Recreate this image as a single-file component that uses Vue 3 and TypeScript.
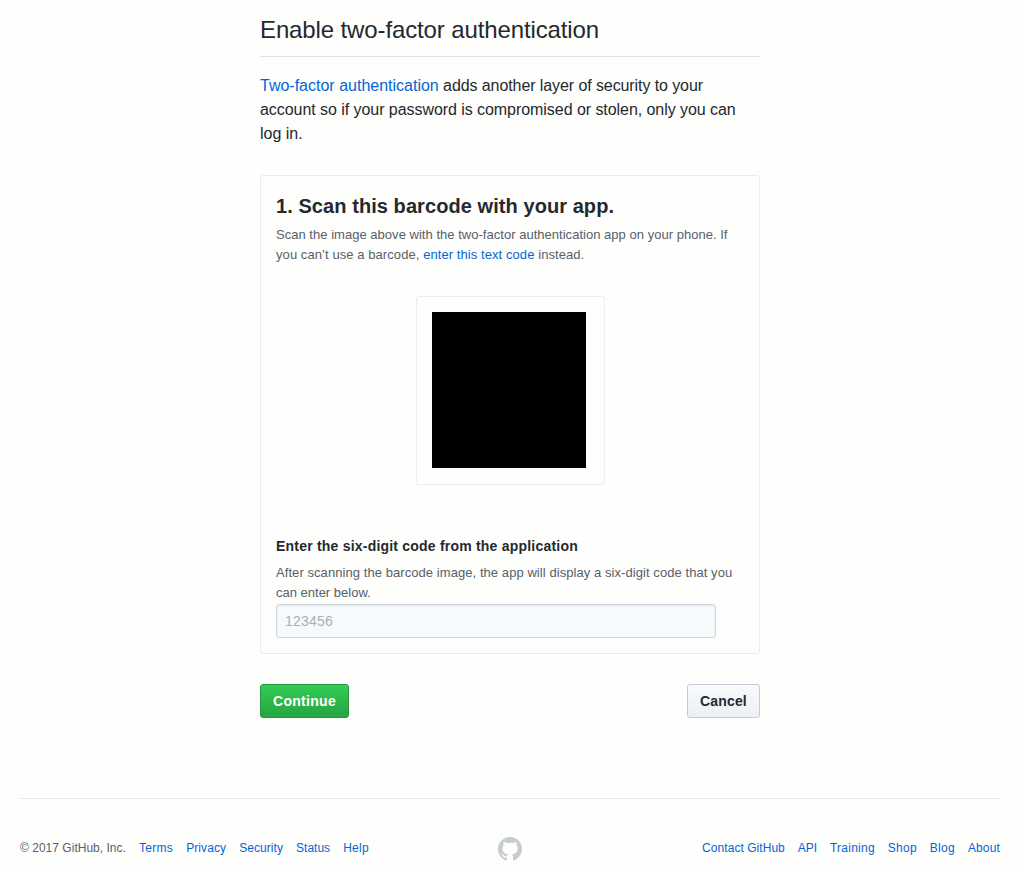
<script setup lang="ts">
import { ref } from 'vue'

interface FooterLink {
  label: string
  tracking: number
}

const code = ref('')
const leftLinks: FooterLink[] = [
  { label: 'Terms', tracking: 0.3 },
  { label: 'Privacy', tracking: 0.1 },
  { label: 'Security', tracking: 0.07 },
  { label: 'Status', tracking: 0 },
  { label: 'Help', tracking: 0.3 },
]
const rightLinks: FooterLink[] = [
  { label: 'Contact GitHub', tracking: 0.05 },
  { label: 'API', tracking: -0.1 },
  { label: 'Training', tracking: 0.25 },
  { label: 'Shop', tracking: 0.25 },
  { label: 'Blog', tracking: 0.25 },
  { label: 'About', tracking: 0.15 },
]
</script>

<template>
  <div class="page">
    <main class="content">
      <h1 class="title">Enable two-factor authentication</h1>
      <p class="lead">
        <a class="link">Two-factor authentication</a><span class="lead-a"> adds another layer of security to your</span><br />
        <span class="lead-b">account so if your password is compromised or stolen, only you can</span><br />
        log in.
      </p>

      <section class="box">
        <h2 class="step">1. Scan this barcode with your app.</h2>
        <p class="note">
          <span class="scan-a">Scan the image above with the two-factor authentication app on your phone. If</span><br />
          <span class="scan-b">you can’t use a barcode, <a class="link">enter this text code</a> instead.</span>
        </p>
        <div class="qr"><div class="qr-code"></div></div>
        <label class="label" for="otp">Enter the six-digit code from the application</label>
        <p class="note">
          <span class="after-a">After scanning the barcode image, the app will display a six-digit code that you</span><br />
          <span>can enter below.</span>
        </p>
        <input id="otp" v-model="code" class="input" type="text" placeholder="123456" />
      </section>

      <div class="actions">
        <button class="btn primary" type="button">Continue</button>
        <button class="btn" type="button">Cancel</button>
      </div>
    </main>

    <footer class="footer">
      <nav class="links">
        <span class="copyright">© 2017 GitHub, Inc.</span>
        <a v-for="l in leftLinks" :key="l.label" class="link" :style="{ letterSpacing: l.tracking + 'px' }">{{ l.label }}</a>
      </nav>
      <svg class="mark" viewBox="0 0 16 16" width="24" height="24" aria-hidden="true">
        <path fill-rule="evenodd" d="M8 0C3.58 0 0 3.58 0 8c0 3.54 2.29 6.53 5.47 7.59.4.07.55-.17.55-.38 0-.19-.01-.82-.01-1.49-2.01.37-2.53-.49-2.69-.94-.09-.23-.48-.94-.82-1.13-.28-.15-.68-.52-.01-.53.63-.01 1.08.58 1.23.82.72 1.21 1.87.87 2.33.66.07-.52.28-.87.51-1.07-1.78-.2-3.64-.89-3.64-3.95 0-.87.31-1.59.82-2.15-.08-.2-.36-1.02.08-2.12 0 0 .67-.21 2.2.82.64-.18 1.32-.27 2-.27.68 0 1.36.09 2 .27 1.53-1.04 2.2-.82 2.2-.82.44 1.1.16 1.92.08 2.12.51.56.82 1.27.82 2.15 0 3.07-1.87 3.75-3.65 3.95.29.25.54.73.54 1.48 0 1.07-.01 1.93-.01 2.2 0 .21.15.46.55.38A8.013 8.013 0 0 0 16 8c0-4.42-3.58-8-8-8z" />
      </svg>
      <nav class="links right">
        <a v-for="l in rightLinks" :key="l.label" class="link" :style="{ letterSpacing: l.tracking + 'px' }">{{ l.label }}</a>
      </nav>
    </footer>
  </div>
</template>

<style>
body {
  background: #fefefc;
}
</style>

<style scoped>
.page {
  box-sizing: border-box;
  height: 872px;
  overflow: hidden;
  padding: 12px 20px 0;
  font-family: "Liberation Sans", Arial, sans-serif;
  color: #24292e;
  background: #fefefc;
}
.content {
  width: 500px;
  margin: 0 auto;
}
.title {
  height: 44px;
  margin: 0 0 17px;
  border-bottom: 1px solid #dfe2e5;
  font-size: 24px;
  font-weight: 400;
  letter-spacing: -0.12px;
  line-height: 36px;
  white-space: nowrap;
}
.lead {
  margin: 0 0 29px;
  font-size: 16px;
  line-height: 24px;
  white-space: nowrap;
}
.lead-a {
  letter-spacing: -0.09px;
}
.lead-b {
  letter-spacing: -0.055px;
}
.link {
  color: #0366d6;
}
.box {
  box-sizing: border-box;
  height: 479px;
  padding: 15px;
  border: 1px solid #eaecec;
  border-radius: 3px;
}
.step {
  margin: 0 0 4px;
  font-size: 20px;
  letter-spacing: 0.07px;
  line-height: 30px;
  white-space: nowrap;
}
.note {
  margin: 0;
  color: #586069;
  font-size: 13px;
  line-height: 20px;
  white-space: nowrap;
}
.scan-a {
  letter-spacing: 0.026px;
}
.scan-b {
  letter-spacing: 0.075px;
}
.after-a {
  letter-spacing: 0.067px;
}
.qr {
  box-sizing: border-box;
  width: 189px;
  height: 189px;
  margin: 31px 0 51px 140px;
  padding: 15px;
  border: 1px solid #ededed;
  border-radius: 3px;
}
.qr-code {
  width: 154px;
  height: 156px;
  background: #000;
}
.label {
  display: block;
  margin-bottom: 6px;
  font-size: 14px;
  font-weight: 700;
  letter-spacing: 0.21px;
  line-height: 21px;
  white-space: nowrap;
}
.input {
  display: block;
  box-sizing: border-box;
  width: 440px;
  height: 34px;
  margin-top: 1px;
  padding: 6px 8px;
  border: 1px solid #cdd4da;
  border-radius: 3px;
  outline: 0;
  background: #f6fafd;
  box-shadow: inset 0 1px 2px rgba(27, 31, 35, 0.075);
  font: 14px/20px "Liberation Sans", Arial, sans-serif;
  letter-spacing: 0.2px;
}
.input::placeholder {
  color: #aaaeb2;
  opacity: 1;
}
.actions {
  display: flex;
  justify-content: space-between;
  margin-top: 30px;
}
.btn {
  box-sizing: border-box;
  width: 73px;
  height: 34px;
  padding: 0;
  border: 1px solid #c6cbd1;
  border-radius: 3px;
  background: linear-gradient(#f8fbfe, #edf1f4 90%);
  color: #24292e;
  font: 700 14px/20px "Liberation Sans", Arial, sans-serif;
  letter-spacing: 0.15px;
}
.primary {
  width: 89px;
  border-color: #259540;
  background: linear-gradient(#32cd55, #28a745 90%);
  color: #fff;
  letter-spacing: 0.3px;
}
.footer {
  display: grid;
  grid-template-columns: 1fr 24px 1fr;
  height: 73px;
  margin-top: 80px;
  border-top: 1px solid #e4eaef;
  color: #586069;
  font-size: 12px;
  line-height: 18px;
}
.links {
  display: flex;
  gap: 13px;
  margin-top: 40px;
  white-space: nowrap;
}
.copyright {
  letter-spacing: 0.02px;
}
.right {
  justify-content: flex-end;
}
.mark {
  margin-top: 38px;
  fill: #c5ccd3;
}
</style>
